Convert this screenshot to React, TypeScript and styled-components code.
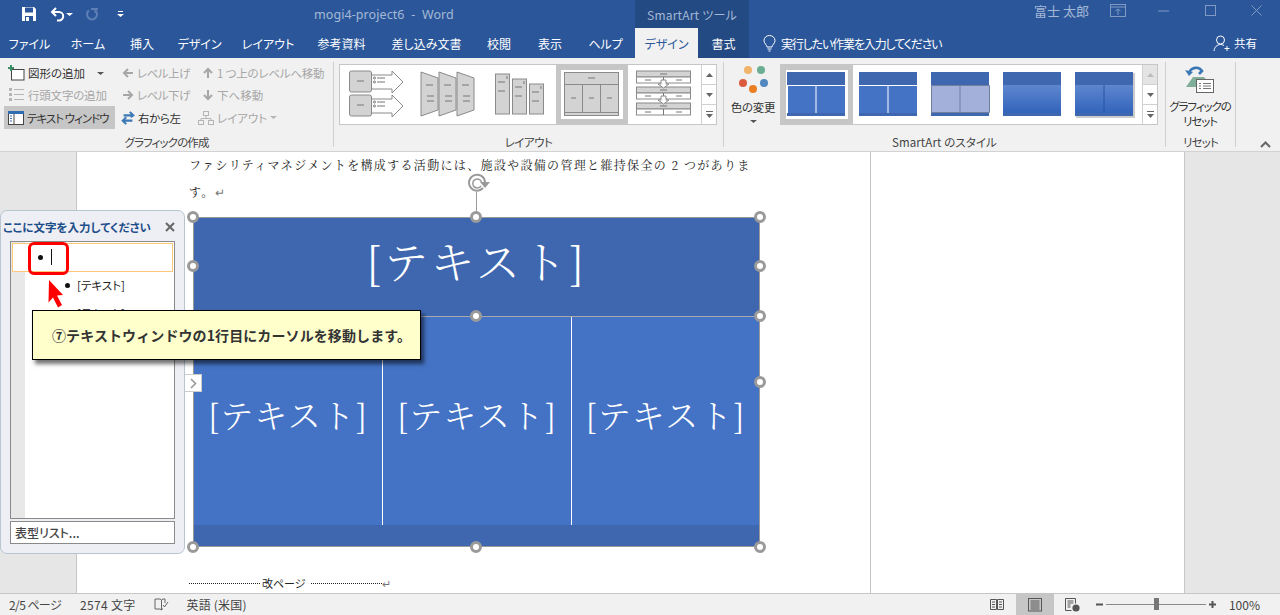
import React from "react";
import styled, { createGlobalStyle } from "styled-components";

const UI = `"Noto Sans CJK JP", "Noto Sans", sans-serif`;

const Global = createGlobalStyle`
  html, body { margin: 0; padding: 0; width: 1280px; height: 615px; overflow: hidden; background: #e6e6e6; }
  body { font-family: ${UI}; font-size: 12px; color: #333; font-feature-settings: "palt"; }
  * { box-sizing: border-box; }
`;

const App_ = styled.div`width: 1280px; height: 615px; display: flex; flex-direction: column; overflow: hidden;`;

/* ---------- title bar ---------- */
const TitleBar = styled.header`height: 28px; background: #2b579a; display: flex; align-items: center; color: #a4b8d6;`;
const Qat = styled.div`width: 314px; display: flex; align-items: center; padding-left: 21px; flex: none;`;
const QatBtn = styled.span<{ $w: number }>`width: ${p => p.$w}px; height: 18px; display: flex; align-items: center;`;
const DocTitle = styled.div`width: 321px; font-size: 12.5px; letter-spacing: .08px; white-space: pre; flex: none; font-family: "Noto Sans", ${UI};`;
const ContextTitle = styled.div`width: 114px; height: 28px; background: #234a82; display: flex; align-items: center; justify-content: center; font-size: 12px; letter-spacing: .2px; flex: none;`;
const UserName = styled.div`margin-left: 285px; width: 61px; font-size: 13px; flex: none; color: #a4b8d6; margin-top: -8px; white-space: nowrap;`;
const WinBtn = styled.span`width: 46.3px; display: flex; justify-content: center; flex: none; margin-top: -6px;`;

/* ---------- tab bar ---------- */
const TabBar = styled.nav`height: 30px; background: #2b579a; display: flex; align-items: stretch; color: #fff;`;
const Tab = styled.div<{ $w: number; $active?: boolean; $dark?: boolean }>`
  width: ${p => p.$w}px; flex: none; display: flex; align-items: center; justify-content: center; font-size: 12px;
  background: ${p => (p.$active ? "#f1f1f1" : p.$dark ? "#234a82" : "transparent")};
  color: ${p => (p.$active ? "#2b579a" : "#fff")};
`;
const Search = styled.div`display: flex; align-items: center; gap: 5px; margin-left: 14px; font-size: 12px; letter-spacing: -1.15px; color: #fff; width: 450px; flex: none;`;
const Share = styled.div`display: flex; align-items: center; gap: 3px; font-size: 11.5px; color: #fff;`;

/* ---------- ribbon ---------- */
const Ribbon = styled.section`height: 94px; flex: none; background: #f1f1f1; border-bottom: 1px solid #d2d2d2; display: flex; padding-top: 4px; position: relative;`;
const Group = styled.div<{ $w: number }>`width: ${p => p.$w}px; height: 89px; flex: none; display: flex; flex-direction: column;`;
const GroupBody = styled.div`flex: 1; display: flex; min-height: 0;`;
const GroupLabel = styled.div<{ $ls?: number }>`height: 20px; line-height: 22px; text-align: center; font-size: 11.5px; letter-spacing: ${p => p.$ls ?? 0}px; color: #444; white-space: nowrap;`;
const Sep = styled.div`width: 1px; height: 85px; background: #d0d0d0; flex: none;`;
const CommandGrid = styled.div`display: grid; grid-template-columns: 111px 77px 130px; column-gap: 3px; grid-template-rows: 22px 22px 23px; margin: 0 0 0 4px;`;
const Cmd = styled.div<{ $off?: boolean; $on?: boolean; $ls?: number; $pl?: number }>`
  display: flex; align-items: center; gap: 3px; font-size: 11.5px; letter-spacing: ${p => p.$ls ?? 0}px; white-space: pre; padding-left: ${p => p.$pl ?? 3}px;
  color: ${p => (p.$off ? "#a6a6a6" : "#333")}; background: ${p => (p.$on ? "#c6c6c6" : "transparent")};
`;
const IconSlot = styled.span<{ $w: number }>`width: ${p => p.$w}px; flex: none; display: flex; align-items: center; justify-content: center;`;
const Gallery = styled.div<{ $ml: number }>`height: 61px; width: 378px; margin: 2px 0 0 ${p => p.$ml}px; background: #fff; border: 1px solid #c6c6c6; display: flex; flex: none;`;
const Slot = styled.div<{ $sel?: boolean }>`width: 72px; height: 59px; flex: none; border: ${p => (p.$sel ? "5px solid #c6c6c6" : "5px solid transparent")}; display: flex; align-items: center; justify-content: center;`;
const ScrollCol = styled.div`margin-left: 1px; width: 15px; flex: none; display: flex; flex-direction: column; border-left: 1px solid #d0d0d0;`;
const ScrollBtn = styled.div<{ $off?: boolean }>`flex: 1; display: flex; align-items: center; justify-content: center; background: ${p => (p.$off ? "#e4e4e4" : "#fff")}; border-bottom: 1px solid #d0d0d0; &:last-child { border-bottom: 0; }`;
const ColorBtn = styled.div`width: 46px; margin: 3px 0 0 6px; flex: none; display: flex; flex-direction: column; align-items: center; white-space: nowrap;`;
const BigLabel = styled.div<{ $mt: number; $ls: number }>`font-size: 11.5px; line-height: 15px; text-align: center; color: #333; margin-top: ${p => p.$mt}px; letter-spacing: ${p => p.$ls}px; white-space: nowrap;`;
const MenuCaret = styled.span`display: flex; margin-top: 5px;`;
const ResetBtn = styled.div`width: 68px; flex: none; display: flex; flex-direction: column; align-items: center; padding-top: 3px;`;
const Collapse = styled.div`position: absolute; right: 9px; bottom: 3px; display: flex;`;

/* ---------- document ---------- */
const Viewport = styled.main`flex: 1; position: relative; display: flex; overflow: hidden; background: #e6e6e6; min-height: 0;`;
const Gutter = styled.div`width: 77px; flex: none; background: #e6e6e6; border-right: 1px solid #c6c6c6;`;
const Page = styled.article`width: 794px; flex: none; background: #fff; border-right: 1px solid #c6c6c6; padding-left: 112px; color: #222;`;
const PageRest = styled.div`width: 314px; flex: none; background: #fff; border-right: 1px solid #c6c6c6;`;
const BodyLine = styled.p`margin: 0; height: 27px; line-height: 25px; font-size: 12px; letter-spacing: 1.33px; white-space: nowrap; font-feature-settings: normal; font-family: "Noto Serif CJK JP", ${UI}; font-weight: 400;`;
const ParaMark = styled.span`color: #777; font-family: ${UI};`;
const Frame = styled.div`position: relative; width: 567px; height: 330px; margin: 11px 0 0 4px; border: 1px solid #9a9a9a; display: grid; grid-template-rows: 99px 208px 1fr; font-family: "Noto Serif CJK JP", ${UI}; font-weight: 300; color: #fff; font-feature-settings: normal;`;
const HeadBlock = styled.div`background: #3e67b0; border-bottom: 1px solid #a9a9a9; display: flex; align-items: center; justify-content: center; font-size: 44px; letter-spacing: 2.5px; padding-bottom: 15px;`;
const Columns = styled.div`display: grid; grid-template-columns: 189px 189px 1fr; background: #4472c4;`;
const Column = styled.div`display: flex; align-items: center; justify-content: center; font-size: 33px; letter-spacing: 1px; border-right: 1px solid #fff; &:last-child { border-right: 0; } padding-bottom: 15px;`;
const FootBlock = styled.div`background: #3e67b0;`;
const Handle = styled.span<{ $x: number; $y: number }>`position: absolute; left: ${p => p.$x}px; top: ${p => p.$y}px; width: 12px; height: 12px; margin: -6px 0 0 -6px; background: #fff; border: 3px solid #9a9a9a; border-radius: 50%;`;
const Rotate = styled.div`position: absolute; left: 272px; top: -45px; width: 24px; height: 45px;`;
const PageBreak = styled.div`margin: 28px 0 0 0; height: 16px; display: flex; align-items: center; font-size: 11px; color: #222; white-space: nowrap; font-feature-settings: "palt";`;
const Dots = styled.span<{ $w: number }>`width: ${p => p.$w}px; border-top: 1px dotted #222; flex: none;`;
const BreakText = styled.span`margin: 0 5px 0 2px;`;

/* ---------- text pane ---------- */
const Pane = styled.aside`position: absolute; left: 0; top: 58px; width: 185px; height: 344px; background: #eeeef5; border: 1px solid #b7c6cf; border-radius: 7px; padding: 0 9px 0 9px; display: flex; flex-direction: column;`;
const PaneHead = styled.div`height: 30px; margin: 0 -7px; display: flex; align-items: center; justify-content: space-between; padding: 2px 7px 0 0; color: #1d4e89; font-size: 11.5px; font-weight: 700; white-space: nowrap;`;
const PaneClose = styled.span`display: flex;`;
const PaneList = styled.div`height: 278px; background: linear-gradient(90deg, #e8e8e8 14px, #fff 14px); border: 1px solid #8a8a8a; padding: 1px; display: flex; flex-direction: column;`;
const FirstRow = styled.div`height: 29px; background: #fff; border: 1px solid #fbc77b; position: relative; flex: none;`;
const Bullet = styled.span<{ $x: number }>`position: absolute; left: ${p => p.$x}px; top: 50%; width: 5px; height: 5px; margin-top: -3px; background: #111; border-radius: 50%;`;
const Caret = styled.span`position: absolute; left: 38px; top: 5px; width: 1px; height: 16px; background: #111;`;
const SubRow = styled.div`height: 28px; position: relative; padding-left: 65px; line-height: 26px; font-size: 11.5px; color: #222; flex: none;`;
const PaneFoot = styled.div`height: 23px; margin-top: 2px; background: #fff; border: 1px solid #8a8a8a; font-size: 12px; padding-left: 4px; line-height: 21px; color: #444; font-weight: 500;`;
const ExpandTab = styled.div`position: absolute; left: 185px; top: 222px; width: 17px; height: 18px; background: #fff; border: 1px solid #ccc; border-left: 0; display: flex; align-items: center; justify-content: center;`;
const RedBox = styled.div`position: absolute; left: 28px; top: 90px; width: 41px; height: 33px; border: 3px solid #f00; border-radius: 6px;`;
const Pointer = styled.div`position: absolute; left: 47px; top: 128px; width: 18px; height: 28px;`;
const Callout = styled.div`position: absolute; left: 32px; top: 158px; width: 389px; height: 50px; background: #ffffcc; border: 1px solid #000; box-shadow: 3px 4px 4px rgba(0,0,0,.55); display: flex; align-items: center; padding-left: 19px; font-size: 14px; letter-spacing: .1px; font-weight: 700; color: #333; white-space: nowrap; font-feature-settings: normal;`;

/* ---------- status bar ---------- */
const StatusBar = styled.footer`height: 22px; flex: none; background: #f1f1f1; border-top: 1px solid #c6c6c6; display: flex; align-items: stretch; font-size: 12px; color: #444; position: relative; padding-right: 20px;`;
const StatusText = styled.span<{ $ml: number; $ls?: number }>`margin-left: ${p => p.$ml}px; letter-spacing: ${p => p.$ls ?? 0}px; display: flex; align-items: center; white-space: pre; flex: none;`;
const ViewGroup = styled.div`margin-left: auto; display: flex; align-items: stretch; flex: none;`;
const ViewBtn = styled.span<{ $on?: boolean }>`width: 38px; flex: none; display: flex; align-items: center; justify-content: center; background: ${p => (p.$on ? "#c6c6c6" : "transparent")};`;
const Zoom = styled.div`display: flex; align-items: center; margin-left: 4px; flex: none;`;
const Track = styled.div`width: 100px; height: 1px; background: #8a8a8a; margin: 0 3px; position: relative;`;
const Thumb = styled.span`position: absolute; left: 48px; top: -6px; width: 5px; height: 12px; background: #777;`;

/* ---------- icons ---------- */
const Save = () => (
  <svg width="16" height="16" viewBox="0 0 16 16"><path d="M1 1h12l2 2v12H1z" fill="#fff" /><rect x="4" y="1.5" width="8" height="5" fill="#2b579a" /><rect x="4" y="10" width="8" height="5" fill="#2b579a" /><rect x="5" y="11" width="3" height="4" fill="#fff" /></svg>
);
const Undo = ({ c = "#fff" }: { c?: string }) => (
  <svg width="16" height="15" viewBox="0 0 16 15" fill="none" stroke={c} strokeWidth="2"><path d="M6 1 2 5l4 4" /><path d="M2.5 5H9a4.2 4.2 0 0 1 0 8.4H7" /></svg>
);
const Redo = () => (
  <svg width="14" height="15" viewBox="0 0 14 15" fill="none" stroke="#5d7fb5" strokeWidth="2"><path d="M4 3.4a5 5 0 1 0 6 0" /><path d="M6 2h6v1" /><path d="M10.5 1v5" /></svg>
);
const Caret_ = ({ c = "#555", s = 3 }: { c?: string; s?: number }) => (
  <svg width={s * 2 + 1} height={s} viewBox={`0 0 ${s * 2 + 1} ${s}`}><path d={`M0 0h${s * 2 + 1}L${s + 0.5} ${s}z`} fill={c} /></svg>
);
const Arrow = ({ d, c = "#a6a6a6" }: { d: "l" | "r" | "u" | "dn"; c?: string }) => {
  const r = { l: 180, r: 0, u: 270, dn: 90 }[d];
  return <svg width="12" height="12" viewBox="0 0 12 12" style={{ transform: `rotate(${r}deg)` }} fill="none" stroke={c} strokeWidth="2"><path d="M1 6h9M6 2l4 4-4 4" /></svg>;
};
const AddShape = () => (
  <svg width="17" height="16" viewBox="0 0 17 16"><rect x="3.5" y="4.5" width="12.5" height="10.5" fill="#fff" stroke="#444" /><path d="M3 0v6M0 3h6" stroke="#3d8f68" strokeWidth="2" /></svg>
);
const Bullets = () => (
  <svg width="15" height="14" viewBox="0 0 15 14" fill="#b5b5b5"><rect x="0" y="0" width="3" height="3" /><rect x="0" y="5" width="3" height="3" /><rect x="0" y="10" width="3" height="3" /><rect x="5" y="1" width="10" height="1" /><rect x="5" y="6" width="10" height="1" /><rect x="5" y="11" width="10" height="1" /></svg>
);
const PaneIcon = () => (
  <svg width="16" height="16" viewBox="0 0 16 16"><rect x=".5" y="1.5" width="15" height="13" fill="#fff" stroke="#444" /><rect x="0" y="1" width="16" height="3" fill="#2f6cb0" /><path d="M6 4v10" stroke="#444" /><path d="M2 6h2M2 8.5h2M2 11h2" stroke="#2f6cb0" /></svg>
);
const Rtl = () => (
  <svg width="16" height="16" viewBox="0 0 16 16" fill="none" stroke="#3c78b5" strokeWidth="2.4"><path d="M3 5h11M10 1l4 4-3 2" /><path d="M13 11H2M6 7l-4 4 4 4" /></svg>
);
const Org = () => (
  <svg width="16" height="14" viewBox="0 0 16 14" fill="none" stroke="#b5b5b5"><rect x="5.5" y=".5" width="5" height="4" /><rect x=".5" y="9.5" width="5" height="4" /><rect x="10.5" y="9.5" width="5" height="4" /><path d="M8 4.5v3M3 9.5v-2h10v2" /></svg>
);
const Bulb = () => (
  <svg width="13" height="17" viewBox="0 0 13 17" fill="none" stroke="#fff"><path d="M4 12c0-2-3-3.500-3-6.500a5.500 5 0 0 1 11 0C12 8.500 9 10 9 12z" /><path d="M4.500 14h4M5.500 16h2" /></svg>
);
const Person = () => (
  <svg width="18" height="17" viewBox="0 0 18 17" fill="none" stroke="#fff"><circle cx="7.500" cy="5" r="4" /><path d="M1 16c.5-4 3-6.500 6.500-6.500 1.500 0 2.500.3 3.500 1" /><path d="M14 11v5M11.500 13.500h5" /></svg>
);
const Ribbon_ = () => (
  <svg width="16" height="14" viewBox="0 0 16 14" fill="none" stroke="#7f9bc4"><rect x=".5" y=".5" width="15" height="12" /><path d="M1 3h14M8 11V5M5.500 7 8 5l2.500 2" /></svg>
);
const Minimize = () => <svg width="12" height="12" viewBox="0 0 12 12"><path d="M0 6h11" stroke="#7f9bc4" /></svg>;
const Maximize = () => <svg width="12" height="12" viewBox="0 0 12 12"><rect x=".5" y=".5" width="10" height="10" fill="none" stroke="#7f9bc4" /></svg>;
const Close = () => <svg width="12" height="12" viewBox="0 0 12 12"><path d="M.5.500l10 10M10.500.500l-10 10" stroke="#7f9bc4" /></svg>;

const G = { fill: "#d3d3d3", stroke: "#8a8a8a" };
const T1 = () => (
  <svg width="62" height="49" viewBox="5 5 62 49" fill="none">
    {[6, 30].map(y => (
      <g key={y}>
        <path d={`M31 ${y + 4}h21v-4l11 11-11 11v-4H31z`} fill="#fff" stroke="#8a8a8a" />
        <rect x="9.500" y={y} width="22" height="21" rx="2" {...G} />
        <path d={`M17 ${y + 10}h7M37 ${y + 7}h8M37 ${y + 11}h8`} stroke="#777" />
        <circle cx="34.500" cy={y + 7} r="1" stroke="#777" /><circle cx="34.500" cy={y + 11} r="1" stroke="#777" />
      </g>
    ))}
  </svg>
);
const T2 = () => (
  <svg width="62" height="49" viewBox="5 5 62 49" fill="none">
    {[9, 27, 45].map(x => (
      <g key={x}>
        <path d={`M${x} 7l17 6v32l-17 6z`} {...G} />
        <path d={`M${x + 5} 20h7M${x + 6} 31h7M${x + 6} 36h7`} stroke="#777" />
      </g>
    ))}
  </svg>
);
const T3 = () => (
  <svg width="62" height="49" viewBox="5 5 62 49" fill="none">
    {[[11, 9], [28, 14], [45, 19]].map(([x, y]) => (
      <g key={x}>
        <rect x={x + .5} y={y} width="14" height={49 - y} {...G} />
        <path d={`M${x + 3} ${y + 8}h7M${x + 3} ${y + 17}h7M${x + 12} ${y + 2}v3`} stroke="#777" />
      </g>
    ))}
  </svg>
);
const T4 = () => (
  <svg width="56" height="46" viewBox="0 0 56 46" fill="none">
    <rect x=".5" y=".5" width="54" height="43" {...G} />
    <path d="M1 12.500h54M1 40.500h54M18.500 13v27M36.500 13v27" stroke="#8a8a8a" />
    <path d="M24 6h7M7 26h5M25 26h5M43 26h5" stroke="#777" />
  </svg>
);
const T5 = () => (
  <svg width="62" height="49" viewBox="5 5 62 49" fill="none">
    {[6, 22, 38].map(y => (
      <g key={y}>
        <rect x="8.500" y={y} width="54" height="6" {...G} />
        <rect x="8.500" y={y + 6} width="54" height="6" fill="#fff" stroke="#8a8a8a" />
        <path d={`M35.500 ${y + 6}v6M32 ${y + 3}h7M17 ${y + 9}h6M48 ${y + 9}h6`} stroke="#777" />
      </g>
    ))}
    {[15, 31].map(y => <path key={y} d={`M33 ${y}h5v4h3l-5.500 4-5.500-4h3z`} fill="#fff" stroke="#8a8a8a" />)}
  </svg>
);

type StyleKind = "flat" | "solid" | "pale" | "grad" | "grad2";
const StyleThumb = ({ k }: { k: StyleKind }) => {
  const id = `g${k}`;
  const grad = k === "grad" || k === "grad2";
  const low = grad ? `url(#${id})` : k === "pale" ? "#a3b1da" : "#4472c4";
  return (
    <svg width="62" height="49" viewBox="0 0 62 49">
      <defs><linearGradient id={id} x1="0" y1="0" x2="0" y2="1"><stop offset="0" stopColor="#5e86cf" /><stop offset="1" stopColor="#3264bb" /></linearGradient></defs>
      {k === "grad2" && <rect x="2" y="3" width="59" height="45" fill="#ccc" />}
      <rect x="1" y="2" width="58" height="44" fill="#3e67b0" />
      <rect x="1" y="15" width="58" height="28" fill={low} />
      {k === "solid" && <path d="M1 15.500h58M30 16v27" stroke="#fff" />}
      {k === "flat" && <path d="M1.500 15v28M1 15.500h58M30 16v27" stroke="#fff" />}
      {k === "pale" && <path d="M1.500 15.500h58v27h-58zM30 16v27" fill="none" stroke="#6f7f9f" />}
      {k === "grad2" && <path d="M30 15v28" stroke="#29559e" />}
    </svg>
  );
};
const Dotz = () => (
  <svg width="36" height="28" viewBox="0 0 36 28" style={{ flex: "none" }}>
    <circle cx="13" cy="5" r="4" fill="#efb469" /><circle cx="26" cy="5" r="4" fill="#6aaf93" />
    <circle cx="8" cy="18" r="4" fill="#da5b3e" /><circle cx="29" cy="18" r="4" fill="#5288bf" />
    <circle cx="18" cy="24" r="4" fill="#e97f20" />
  </svg>
);
const ResetIcon = () => (
  <svg width="32" height="30" viewBox="0 0 32 30" fill="none" style={{ flex: "none" }}>
    <path d="M9 12h11l9 10H2z" fill="#7fae9a" />
    <rect x="12.500" y="14.500" width="17" height="13" fill="#fff" stroke="#666" />
    <path d="M15 18.500h2M19 18.500h8M15 21h2M19 21h8M15 23.500h2M19 23.500h8" stroke="#777" />
    <path d="M5 8C7 2 15 1 18 6l-3 3" stroke="#3c78b5" strokeWidth="2.600" />
    <path d="M1 5l4 6 4-4z" fill="#3c78b5" />
  </svg>
);
const Up = ({ c = "#666" }: { c?: string }) => <svg width="7" height="4" viewBox="0 0 7 4"><path d="M3.500 0 7 4H0z" fill={c} /></svg>;
const Down = () => <svg width="7" height="4" viewBox="0 0 7 4"><path d="M0 0h7L3.500 4z" fill="#666" /></svg>;
const More = () => <svg width="7" height="7" viewBox="0 0 7 7"><path d="M0 0h7v1H0zM0 3h7L3.500 7z" fill="#666" /></svg>;
const Scroll = ({ upOff }: { upOff?: boolean }) => (
  <ScrollCol>
    <ScrollBtn $off={upOff}><Up c={upOff ? "#bbb" : "#666"} /></ScrollBtn>
    <ScrollBtn><Down /></ScrollBtn>
    <ScrollBtn><More /></ScrollBtn>
  </ScrollCol>
);
const RotateIcon = () => (
  <svg width="24" height="45" viewBox="0 0 24 45" fill="none" stroke="#9a9a9a">
    <path d="M17 15a8 8 0 1 1 2-6" strokeWidth="2" />
    <path d="M15 13a4.500 4.500 0 1 1 .5-4" strokeWidth="1.500" />
    <path d="M14 9h10l-5 6z" fill="#9a9a9a" stroke="none" />
    <path d="M10.500 19v26" strokeWidth="1" />
  </svg>
);
const BookCheck = () => (
  <svg width="15" height="14" viewBox="0 0 15 14" fill="none" stroke="#666"><path d="M1 1h5l1.500 1L9 1h2v4M1 1v10h5l1.500 1V2M9 11h-1" /><path d="M9 7l1.500 2L14 4" /></svg>
);
const ReadIcon = () => (
  <svg width="14" height="13" viewBox="0 0 14 13" fill="none" stroke="#555"><path d="M.5 1.500h6v10h-6zM7.500 1.500h6v10h-6zM2 4h3M2 6.500h3M2 9h3M9 4h3M9 6.500h3M9 9h3" /></svg>
);
const PrintIcon = () => (
  <svg width="14" height="14" viewBox="0 0 14 14" fill="none" stroke="#555"><rect x=".5" y=".5" width="13" height="12.500" /><path d="M2.500 3h9M2.500 5h9M2.500 7h9M2.500 9h9M2.500 11h9" /></svg>
);
const WebIcon = () => (
  <svg width="15" height="14" viewBox="0 0 15 14" fill="none" stroke="#555"><path d="M.5 12.500V.5h10v5M.5 12.500h6M2.500 3h6M2.500 5h6M2.500 7h3M2.500 9h3" /><circle cx="11" cy="10" r="3.600" fill="#555" stroke="none" /></svg>
);

export default function App() {
  return (
    <App_>
      <Global />
      <TitleBar>
        <Qat>
          <QatBtn $w={29}><Save /></QatBtn>
          <QatBtn $w={16}><Undo /></QatBtn>
          <QatBtn $w={19}><Caret_ c="#fff" /></QatBtn>
          <QatBtn $w={32}><Redo /></QatBtn>
          <QatBtn $w={10}><svg width="7" height="6" viewBox="0 0 7 6"><path d="M1 0h5v1H1zM0 3h7L3.500 6z" fill="#fff" /></svg></QatBtn>
        </Qat>
        <DocTitle>mogi4-project6  -  Word</DocTitle>
        <ContextTitle>SmartArt ツール</ContextTitle>
        <UserName>富士 太郎</UserName>
        <WinBtn><Ribbon_ /></WinBtn>
        <WinBtn><Minimize /></WinBtn>
        <WinBtn><Maximize /></WinBtn>
        <WinBtn><Close /></WinBtn>
      </TitleBar>
      <TabBar>
        <Tab $w={59}>ファイル</Tab>
        <Tab $w={58}>ホーム</Tab>
        <Tab $w={50}>挿入</Tab>
        <Tab $w={65}>デザイン</Tab>
        <Tab $w={72}>レイアウト</Tab>
        <Tab $w={75}>参考資料</Tab>
        <Tab $w={95}>差し込み文書</Tab>
        <Tab $w={50}>校閲</Tab>
        <Tab $w={52}>表示</Tab>
        <Tab $w={59}>ヘルプ</Tab>
        <Tab $w={63} $active>デザイン</Tab>
        <Tab $w={51} $dark>書式</Tab>
        <Search><Bulb />実行したい作業を入力してください</Search>
        <Share><Person />共有</Share>
      </TabBar>
      <Ribbon>
        <Group $w={333}>
          <GroupBody>
            <CommandGrid>
              <Cmd><IconSlot $w={18}><AddShape /></IconSlot>図形の追加<IconSlot $w={24}><Caret_ /></IconSlot></Cmd>
              <Cmd $off $ls={-.5}><IconSlot $w={13}><Arrow d="l" /></IconSlot>レベル上げ</Cmd>
              <Cmd $off $ls={-.2}><IconSlot $w={13}><Arrow d="u" /></IconSlot>1 つ上のレベルへ移動</Cmd>
              <Cmd $off $ls={-.2}><IconSlot $w={18}><Bullets /></IconSlot>行頭文字の追加</Cmd>
              <Cmd $off $ls={-.5}><IconSlot $w={13}><Arrow d="r" /></IconSlot>レベル下げ</Cmd>
              <Cmd $off><IconSlot $w={13}><Arrow d="dn" /></IconSlot>下へ移動</Cmd>
              <Cmd $on $ls={-1}><IconSlot $w={17}><PaneIcon /></IconSlot>テキスト ウィンドウ</Cmd>
              <Cmd $ls={-.4}><IconSlot $w={14}><Rtl /></IconSlot>右から左</Cmd>
              <Cmd $off $pl={0}><IconSlot $w={16}><Org /></IconSlot>レイアウト<Caret_ c="#b5b5b5" /></Cmd>
            </CommandGrid>
          </GroupBody>
          <GroupLabel $ls={-.9}>グラフィックの作成</GroupLabel>
        </Group>
        <Sep />
        <Group $w={389}>
          <GroupBody>
            <Gallery $ml={5}>
              <Slot><T1 /></Slot>
              <Slot><T2 /></Slot>
              <Slot><T3 /></Slot>
              <Slot $sel><T4 /></Slot>
              <Slot><T5 /></Slot>
              <Scroll />
            </Gallery>
          </GroupBody>
          <GroupLabel $ls={-.5}>レイアウト</GroupLabel>
        </Group>
        <Sep />
        <Group $w={441}>
          <GroupBody>
            <ColorBtn>
              <Dotz />
              <BigLabel $mt={7} $ls={-.3}>色の変更</BigLabel>
              <MenuCaret><Caret_ /></MenuCaret>
            </ColorBtn>
            <Gallery $ml={4}>
              <Slot $sel><StyleThumb k="flat" /></Slot>
              <Slot><StyleThumb k="solid" /></Slot>
              <Slot><StyleThumb k="pale" /></Slot>
              <Slot><StyleThumb k="grad" /></Slot>
              <Slot><StyleThumb k="grad2" /></Slot>
              <Scroll upOff />
            </Gallery>
          </GroupBody>
          <GroupLabel $ls={.1}>SmartArt のスタイル</GroupLabel>
        </Group>
        <Sep />
        <Group $w={69}>
          <GroupBody>
            <ResetBtn>
              <ResetIcon />
              <BigLabel $mt={4} $ls={-1.1}>グラフィックの<br />リセット</BigLabel>
            </ResetBtn>
          </GroupBody>
          <GroupLabel $ls={-.8}>リセット</GroupLabel>
        </Group>
        <Sep />
        <Collapse><svg width="11" height="7" viewBox="0 0 11 7" fill="none" stroke="#666" strokeWidth="2"><path d="M1 6l4.500-4.500L10 6" /></svg></Collapse>
      </Ribbon>
      <Viewport>
        <Gutter />
        <Page>
          <BodyLine>ファシリティマネジメントを構成する活動には、施設や設備の管理と維持保全の 2 つがありま</BodyLine>
          <BodyLine>す。<ParaMark>↵</ParaMark></BodyLine>
          <Frame>
            <HeadBlock>[テキスト]</HeadBlock>
            <Columns>
              <Column>[テキスト]</Column>
              <Column>[テキスト]</Column>
              <Column>[テキスト]</Column>
            </Columns>
            <FootBlock />
            <Rotate><RotateIcon /></Rotate>
            <Handle $x={-1} $y={-1} />
            <Handle $x={282} $y={-1} />
            <Handle $x={566} $y={-1} />
            <Handle $x={-1} $y={48} />
            <Handle $x={566} $y={48} />
            <Handle $x={-1} $y={98} />
            <Handle $x={282} $y={98} />
            <Handle $x={566} $y={98} />
            <Handle $x={566} $y={164} />
            <Handle $x={-1} $y={329} />
            <Handle $x={282} $y={329} />
            <Handle $x={566} $y={329} />
          </Frame>
          <PageBreak><Dots $w={71} /><BreakText>改ページ</BreakText><Dots $w={71} /><ParaMark>↵</ParaMark></PageBreak>
        </Page>
        <PageRest />
        <Pane>
          <PaneHead>ここに文字を入力してください<PaneClose><svg width="10" height="10" viewBox="0 0 10 10"><path d="M1 1l8 8M9 1L1 9" stroke="#666" strokeWidth="2" /></svg></PaneClose></PaneHead>
          <PaneList>
            <FirstRow><Bullet $x={25} /><Caret /></FirstRow>
            <SubRow><Bullet $x={53} />[テキスト]</SubRow>
            <SubRow><Bullet $x={53} />[テキスト]</SubRow>
          </PaneList>
          <PaneFoot>表型リスト...</PaneFoot>
        </Pane>
        <ExpandTab><svg width="7" height="11" viewBox="0 0 7 11" fill="none" stroke="#999" strokeWidth="1.600"><path d="M1 1l4.500 4.500L1 10" /></svg></ExpandTab>
        <RedBox />
        <Pointer><svg width="18" height="28" viewBox="0 0 18 28"><path d="M2 0l14 15-6 .5L15 25l-4 2.500-5-10-4.500 5z" fill="#f00" /></svg></Pointer>
        <Callout>⑦テキストウィンドウの1行目にカーソルを移動します。</Callout>
      </Viewport>
      <StatusBar>
        <StatusText $ml={9} $ls={-.6}>2/5 ページ</StatusText>
        <StatusText $ml={19} $ls={.3}>2574 文字</StatusText>
        <StatusText $ml={19}><BookCheck /></StatusText>
        <StatusText $ml={17} $ls={.2}>英語 (米国)</StatusText>
        <ViewGroup>
          <ViewBtn><ReadIcon /></ViewBtn>
          <ViewBtn $on><PrintIcon /></ViewBtn>
          <ViewBtn><WebIcon /></ViewBtn>
        </ViewGroup>
        <Zoom>
          <svg width="7" height="7" viewBox="0 0 7 7"><path d="M0 3.500h7" stroke="#555" strokeWidth="2" /></svg>
          <Track><Thumb /></Track>
          <svg width="7" height="7" viewBox="0 0 7 7"><path d="M0 3.500h7M3.500 0v7" stroke="#555" strokeWidth="2" /></svg>
        </Zoom>
        <StatusText $ml={13}>100%</StatusText>
      </StatusBar>
    </App_>
  );
}
